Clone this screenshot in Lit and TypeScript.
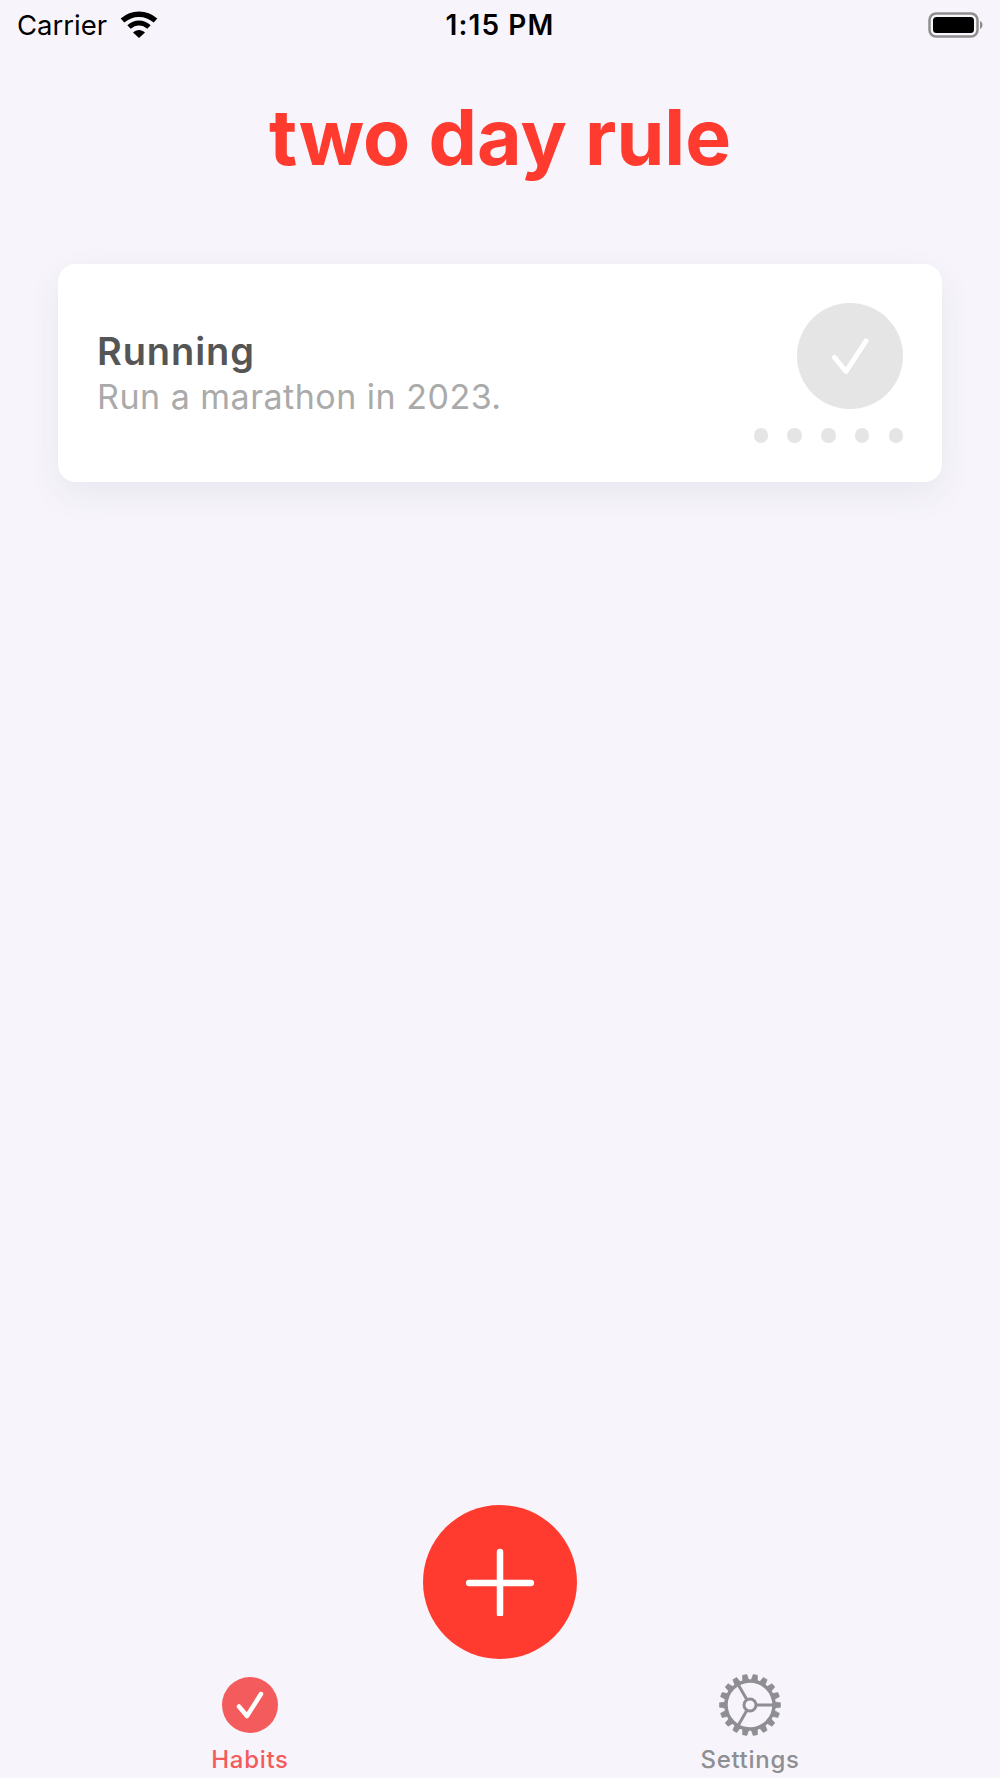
import { LitElement, css, html, svg } from 'lit';
import { customElement } from 'lit/decorators.js';

const DOTS = [0, 1, 2, 3, 4];
const GEAR_TEETH = Array.from({ length: 18 }, (_, i) => i * 20 + 10);

@customElement('app-root')
export class AppRoot extends LitElement {
  static styles = css`
    :host {
      background: #f7f5fb;
      display: flex;
      flex-direction: column;
      font-family: Inter, 'Liberation Sans', sans-serif;
      height: 1778px;
      overflow: hidden;
    }

    .status {
      align-items: center;
      display: grid;
      grid-template-columns: 1fr auto 1fr;
      height: 50px;
      padding: 0 17px;
    }

    .status-left {
      align-items: center;
      display: flex;
      font-size: 27.500px;
      gap: 13px;
    }

    .time {
      font-size: 28px;
      font-weight: 600;
      letter-spacing: 1.100px;
    }

    .battery {
      justify-self: end;
    }

    h1 {
      color: #ff3b30;
      font-size: 77px;
      font-weight: 700;
      line-height: 92px;
      margin: 41px 0 0;
      text-align: center;
    }

    .card {
      align-items: flex-start;
      background: #fff;
      border-radius: 18px;
      box-shadow: 0 12px 34px rgba(60, 50, 90, 0.07);
      box-sizing: border-box;
      display: flex;
      height: 218px;
      justify-content: space-between;
      margin: 81px 58px 0;
      padding: 39px 39px;
    }

    .card-text {
      padding-top: 26px;
    }

    .name {
      color: #555;
      font-size: 38px;
      font-weight: 600;
      letter-spacing: 0.900px;
      line-height: 45px;
    }

    .note {
      color: #aaa;
      font-size: 34px;
      letter-spacing: 0.500px;
      line-height: 45px;
    }

    .progress {
      align-items: flex-end;
      display: flex;
      flex-direction: column;
      gap: 19px;
    }

    .check {
      align-items: center;
      background: #e5e5e5;
      border-radius: 50%;
      display: flex;
      height: 106px;
      justify-content: center;
      width: 106px;
    }

    .dots {
      display: flex;
      gap: 19.200px;
    }

    .dot {
      background: #e5e5e5;
      border-radius: 50%;
      height: 14.500px;
      width: 14.500px;
    }

    .fab {
      align-items: center;
      background: #ff3b30;
      border-radius: 50%;
      display: flex;
      height: 154px;
      justify-content: center;
      margin: auto auto 0;
      width: 154px;
    }

    .tabs {
      display: grid;
      grid-template-columns: 1fr 1fr;
      height: 119px;
    }

    .tab {
      align-items: center;
      color: #8e8e93;
      display: flex;
      flex-direction: column;
      font-size: 24px;
      font-weight: 500;
      gap: 9px;
      letter-spacing: 0.700px;
      padding-top: 15px;
    }

    .tab.active {
      color: #f45b5d;
    }

    .tab-icon {
      align-items: center;
      display: flex;
      height: 62px;
      justify-content: center;
    }

    .tab-dot {
      align-items: center;
      background: #f45b5d;
      border-radius: 50%;
      display: flex;
      height: 56px;
      justify-content: center;
      width: 56px;
    }
  `;

  render() {
    return html`
      <div class="status">
        <div class="status-left">
          <span>Carrier</span>
          <svg width="38" height="28" viewBox="0 0 38 28">
            <path d="M2.500 9.500C12 1 26 1 35.500 9.500" fill="none" stroke="#000" stroke-width="5.500" />
            <path d="M9 16C15 10.500 23 10.500 29 16" fill="none" stroke="#000" stroke-width="5" />
            <path d="M13 21.500C16.500 18 21.500 18 25 21.500L19 27Z" fill="#000" />
          </svg>
        </div>
        <span class="time">1:15 PM</span>
        <svg class="battery" width="55" height="28" viewBox="0 0 55 28">
          <rect x="1.500" y="2.500" width="48" height="23" rx="6.500" fill="none" stroke="#8e8e8e" stroke-width="2.500" />
          <rect x="5" y="6" width="41" height="16" rx="3.500" fill="#000" />
          <path d="M52 10C54 11 54.500 12.500 54.500 14C54.500 15.500 54 17 52 18Z" fill="#8e8e8e" />
        </svg>
      </div>

      <h1>two day rule</h1>

      <section class="card">
        <div class="card-text">
          <div class="name">Running</div>
          <div class="note">Run a marathon in 2023.</div>
        </div>
        <div class="progress">
          <div class="check">
            <svg width="38" height="40" viewBox="0 0 38 40">
              <path d="M3.500 21.500L15 35.500L35 5" fill="none" stroke="#fff" stroke-width="5" stroke-linecap="round" stroke-linejoin="round" />
            </svg>
          </div>
          <div class="dots">${DOTS.map(() => html`<span class="dot"></span>`)}</div>
        </div>
      </section>

      <div class="fab">
        <svg width="68" height="68" viewBox="0 0 68 68">
          <path d="M34 4V66M3 35H65" fill="none" stroke="#fff" stroke-width="6.500" stroke-linecap="round" />
        </svg>
      </div>

      <nav class="tabs">
        <div class="tab active">
          <div class="tab-icon">
            <div class="tab-dot">
              <svg width="28" height="28" viewBox="0 0 28 28">
                <path d="M3 15.500L11 25L25 3" fill="none" stroke="#fff" stroke-width="4.500" stroke-linecap="round" stroke-linejoin="round" />
              </svg>
            </div>
          </div>
          <span>Habits</span>
        </div>
        <div class="tab">
          <div class="tab-icon">
            <svg width="62" height="62" viewBox="-31 -31 62 62">
              ${GEAR_TEETH.map(
                a => svg`<path d="M-3.200 -24L-2.200 -30.500H2.200L3.200 -24Z" fill="#8e8e93" stroke="#8e8e93" stroke-width="0.600" stroke-linejoin="round" transform="rotate(${a})" />`,
              )}
              <circle r="24" fill="none" stroke="#8e8e93" stroke-width="3.500" />
              <circle r="6" fill="none" stroke="#8e8e93" stroke-width="3" />
              <path d="M7 0H24M-3.500 6L-12 20.800M-3.500 -6L-12 -20.800" stroke="#8e8e93" stroke-width="3" />
            </svg>
          </div>
          <span>Settings</span>
        </div>
      </nav>
    `;
  }
}
